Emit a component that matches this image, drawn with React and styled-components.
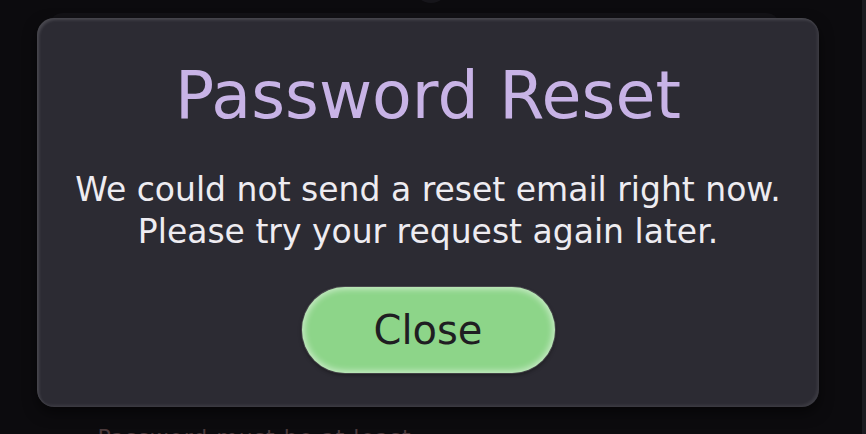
import React from "react";
import styled, { createGlobalStyle } from "styled-components";

const colors = {
  page: "#0c0b0e",
  card: "#131216",
  modal: "#2c2b33",
  lilac: "#c8b3e6",
  text: "#eeecf1",
  green: "#8dd589",
  ink: "#1f1e22",
};

const GlobalStyle = createGlobalStyle`
  html, body {
    margin: 0;
    padding: 0;
    background: ${colors.page};
    font-family: "DejaVu Sans", "Noto Sans", sans-serif;
    overflow: hidden;
  }
`;

/**
 * Password reset failure dialog over the login page
 */
function App() {
  return (
    <>
      <GlobalStyle />
      <Page>
        <Underlay>
          <Avatar />
          <Card>
            <HintText>Password must be at least</HintText>
          </Card>
        </Underlay>
        <Overlay>
          <Modal role="dialog" aria-labelledby="reset-title">
            <Title id="reset-title">Password Reset</Title>
            <Message>
              We could not send a reset email right now.
              <br />
              Please try your request again later.
            </Message>
            <CloseButton type="button">Close</CloseButton>
          </Modal>
        </Overlay>
      </Page>
    </>
  );
}

export default App;

const Page = styled.div`
  position: relative;
  width: 866px;
  height: 434px;
  overflow: hidden;
  background: ${colors.page};
  border-right: 4px solid #1c1b20;
  box-sizing: border-box;
`;

const Underlay = styled.div`
  display: flex;
  flex-direction: column;
  align-items: center;
  height: 100%;
`;

const Avatar = styled.div`
  width: 34px;
  height: 34px;
  margin-top: -31px;
  border-radius: 50%;
  background: #16151a;
`;

const Card = styled.div`
  margin-top: 10px;
  width: 731px;
  height: 365px;
  margin-left: -34px;
  border-radius: 14px;
  background: ${colors.card};
  box-shadow: 0 2px 0 #1e1d22;
  position: relative;
`;

const HintText = styled.p`
  position: absolute;
  left: 49px;
  top: 412px;
  margin: 0;
  font-size: 22px;
  line-height: 26px;
  letter-spacing: 1px;
  color: #4b3a3c;
`;

const Overlay = styled.div`
  position: absolute;
  inset: 0;
  display: flex;
  align-items: flex-start;
  padding: 18px 0 0 37px;
`;

const Modal = styled.div`
  width: 782px;
  height: 389px;
  box-sizing: border-box;
  border-radius: 17px;
  background: ${colors.modal};
  box-shadow: inset 2px 2px 3px rgba(255, 255, 255, 0.14),
    inset -2px -2px 3px rgba(255, 255, 255, 0.08),
    0 6px 14px rgba(0, 0, 0, 0.5);
  display: flex;
  flex-direction: column;
  align-items: center;
  padding-top: 40px;
`;

const Title = styled.h1`
  margin: 0;
  font-weight: 400;
  font-size: 65px;
  line-height: 76px;
  color: ${colors.lilac};
`;

const Message = styled.p`
  margin: 35px 0 0;
  font-size: 33px;
  line-height: 42px;
  text-align: center;
  color: ${colors.text};
`;

const CloseButton = styled.button`
  margin-top: 34px;
  width: 253px;
  height: 86px;
  border: none;
  border-radius: 43px;
  background: ${colors.green};
  box-shadow: inset 0 0 6px 2px rgba(255, 255, 255, 0.55),
    0 0 0 1px rgba(120, 120, 120, 0.4), 0 2px 4px rgba(0, 0, 0, 0.4);
  font-family: inherit;
  font-size: 40px;
  color: ${colors.ink};
  cursor: pointer;
`;
